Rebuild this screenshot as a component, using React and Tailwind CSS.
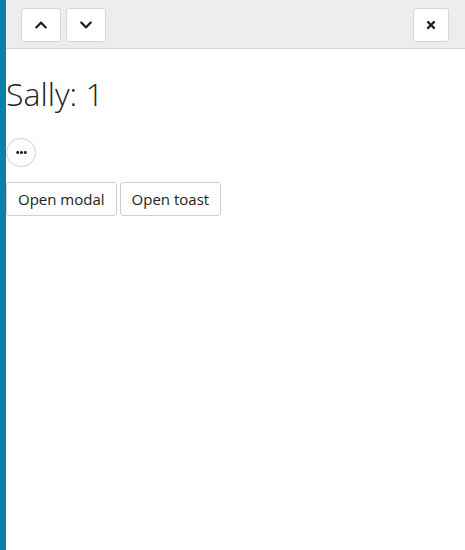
import React from "react";
import { FaChevronUp, FaChevronDown, FaTimes, FaEllipsisH } from "react-icons/fa";

export default function App() {
  return (
    <div className="flex h-[550px] w-[465px] bg-white" style={{ fontFamily: '"Open Sans", sans-serif' }}>
      {/* accent bar */}
      <div className="w-[6px] shrink-0 bg-[#0a7fac]" />

      <div className="flex min-w-0 flex-1 flex-col">
        {/* toolbar */}
        <div className="flex h-[49px] items-start justify-between border-b border-[#d4d4d4] bg-[#ededed] pt-[8px] pl-[15px] pr-[16px]">
          <div className="flex gap-[5px]">
            <button className="flex h-[34px] w-[40px] items-center justify-center rounded-[3px] border border-[#d6d6d6] bg-white text-[#1c1c1c]">
              <FaChevronUp className="h-[14px] w-[14px]" />
            </button>
            <button className="flex h-[34px] w-[40px] items-center justify-center rounded-[3px] border border-[#d6d6d6] bg-white text-[#1c1c1c]">
              <FaChevronDown className="h-[14px] w-[14px]" />
            </button>
          </div>
          <button className="flex h-[34px] w-[36px] items-center justify-center rounded-[3px] border border-[#d6d6d6] bg-white text-[#1c1c1c]">
            <FaTimes className="h-[12px] w-[12px]" />
          </button>
        </div>

        {/* content */}
        <div className="flex flex-col items-start">
          <h1 className="mt-[25px] text-[32px] font-light leading-[40px] text-[#222]">Sally: 1</h1>

          <button className="mt-[24px] flex h-[29px] w-[30px] items-center justify-center rounded-full border border-[#cfcfcf] bg-white text-[#222]">
            <FaEllipsisH className="h-[11px] w-[11px]" />
          </button>

          <div className="mt-[15px] flex gap-[3px]">
            <button className="h-[34px] rounded-[3px] border border-[#d0d0d0] bg-white px-[11px] text-[15px] text-[#222]">
              Open modal
            </button>
            <button className="h-[34px] rounded-[3px] border border-[#d0d0d0] bg-white px-[11px] text-[15px] text-[#222]">
              Open toast
            </button>
          </div>
        </div>
      </div>
    </div>
  );
}
